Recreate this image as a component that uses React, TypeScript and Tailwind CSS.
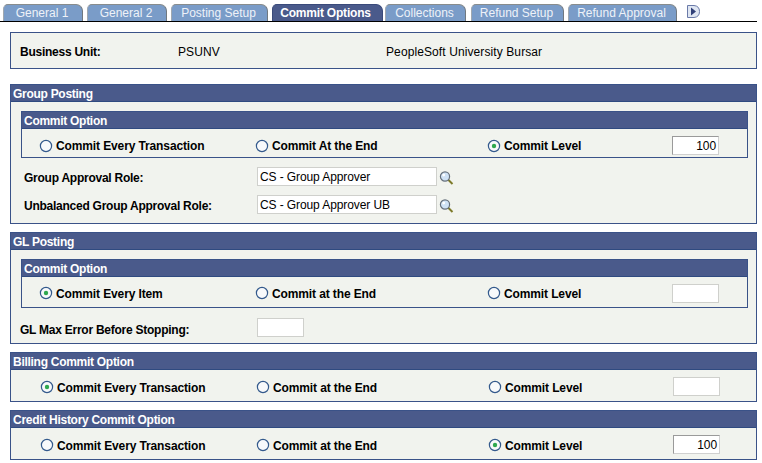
import React from "react";

const font = { fontFamily: '"Liberation Sans", Arial, sans-serif' };

function Radio({ on }: { on?: boolean }) {
  return (
    <svg width="14" height="14" viewBox="0 0 14 14" className="shrink-0">
      <circle cx="7" cy="7" r="5.6" fill="#f7f9fb" stroke="#33598c" strokeWidth="1.2" />
      {on && <circle cx="7" cy="7" r="2.2" fill="#2fa84f" />}
    </svg>
  );
}

function Lookup() {
  return (
    <svg width="15" height="14" viewBox="0 0 15 14" className="shrink-0">
      <line x1="9" y1="8.5" x2="13.5" y2="13" stroke="#7d7a2a" strokeWidth="2" />
      <circle cx="6" cy="5.5" r="4.6" fill="#cfe2f5" stroke="#66707c" strokeWidth="1.2" />
      <circle cx="4.7" cy="4.1" r="1.4" fill="#ffffff" />
    </svg>
  );
}

function Header({ children }: { children: React.ReactNode }) {
  return (
    <div className="h-[17px] bg-[#4a5a8b] border-b border-[#2f4a80] pl-[2px] text-[12px] leading-[18px] font-bold text-white tracking-[-0.28px]">
      {children}
    </div>
  );
}

function TextBox({ className, value, strong }: { className: string; value?: string; strong?: boolean }) {
  return (
    <div
      className={`h-[19px] bg-white border font-normal ${strong ? "border-t-[#9a9a9a] border-l-[#9a9a9a] border-r-[#d0d0d0] border-b-[#d0d0d0]" : "border-[#cfd0cc]"} text-[12px] leading-[18px] text-black tracking-[-0.1px] ${className}`}
    >
      {value}
    </div>
  );
}

function Option({ on, label, width, low }: { on: boolean; label: string; width: string; low?: boolean }) {
  return (
    <div className={`${width} flex items-center gap-[3px] h-[16px]`}>
      <Radio on={on} />
      <span className={`tracking-[-0.12px] ${low ? "pt-[3px]" : "pt-[1px]"}`}>{label}</span>
    </div>
  );
}

function RadioRow({
  labels,
  selected,
  value,
  strong,
  low,
  className,
}: {
  labels: string[];
  selected: number;
  value?: string;
  strong?: boolean;
  low?: boolean;
  className: string;
}) {
  return (
    <div className={`flex items-center text-[12px] font-bold text-black ${className}`}>
      <Option on={selected === 0} label={labels[0]} width="w-[216px]" low={low} />
      <Option on={selected === 1} label={labels[1]} width="w-[232px]" low={low} />
      <Option on={selected === 2} label={labels[2]} width="w-[185px]" low={low} />
      <TextBox className="w-[47px] text-right pr-[2px]" value={value} strong={strong} />
    </div>
  );
}

const tabs = [
  { t: "General 1", c: "w-[80px]" },
  { t: "General 2", c: "w-[80px] ml-[4px]" },
  { t: "Posting Setup", c: "w-[97px] ml-[4px]" },
  { t: "Commit Options", c: "w-[111px] ml-[4px]", on: true },
  { t: "Collections", c: "w-[81px] ml-[2px]" },
  { t: "Refund Setup", c: "w-[93px] ml-[5px]" },
  { t: "Refund Approval", c: "w-[109px] ml-[4px]" },
];

export default function App() {
  return (
    <div className="w-[762px] h-[463px] bg-white overflow-hidden" style={font}>
      <div className="h-[22px] pt-[4px] pr-[5px]">
        <div className="flex items-end pl-[3px] h-[18px] border-b border-black">
          {tabs.map((x) => (
            <div
              key={x.t}
              className={`${x.c} h-[17px] rounded-tl-[5px] rounded-tr-[7px] border-t border-l border-r text-center text-[12px] leading-[17px] ${
                x.on
                  ? "bg-[#4a5a8b] border-[#3a4a7a] text-white font-bold tracking-[-0.2px] pr-[4px]"
                  : "bg-[#7a9cc8] border-t-[#888c8c] border-l-[#a0a8b0] border-r-[#70787f] text-[#eef2f8] pr-[2px]"
              }`}
            >
              {x.t}
            </div>
          ))}
          <svg width="13" height="15" viewBox="0 0 13 15" className="ml-[10px] mb-[2px] shrink-0">
            <path d="M0.5 1.5 H7 Q12.5 2 12.5 7.5 Q12.5 13 7 13.5 H0.5 Z" fill="#dfe6f2" stroke="#6a7aa8" />
            <path d="M4 3.5 L9 7.5 L4 11.5 Z" fill="#2f3f78" />
          </svg>
        </div>
      </div>

      <div className="ml-[10px] mt-[10px] h-[37px] w-[747px] bg-[#f1f3ee] border border-[#3a5288] flex items-center pt-[2px] text-[12px] text-black">
        <div className="w-[167px] pl-[9px] font-bold tracking-[-0.25px]">Business Unit:</div>
        <div className="w-[208px] tracking-[0.1px]">PSUNV</div>
        <div className="tracking-[0.1px]">PeopleSoft University Bursar</div>
      </div>

      <div className="ml-[10px] mt-[15px] w-[747px] h-[140px] bg-[#f1f3ee] border border-[#3a5288]">
        <Header>Group Posting</Header>
        <div className="ml-[10px] mt-[9px] w-[727px] h-[47px] border border-[#3a5288]">
          <Header>Commit Option</Header>
          <RadioRow
            className="pl-[17px] h-[27px] pt-[6px]"
            labels={["Commit Every Transaction", "Commit At the End", "Commit Level"]}
            selected={2}
            value="100"
            strong
          />
        </div>
        <div className="flex items-center h-[19px] mt-[9px] pt-[2px] text-[12px] font-bold text-black tracking-[-0.25px]">
          <div className="w-[246px] pl-[13px]">Group Approval Role:</div>
          <TextBox className="w-[180px] pl-[2px] -mt-[2px]" value="CS - Group Approver" />
          <div className="ml-[2px]"><Lookup /></div>
        </div>
        <div className="flex items-center h-[19px] mt-[9px] pt-[2px] text-[12px] font-bold text-black tracking-[-0.25px]">
          <div className="w-[246px] pl-[13px]">Unbalanced Group Approval Role:</div>
          <TextBox className="w-[180px] pl-[2px] -mt-[2px]" value="CS - Group Approver UB" />
          <div className="ml-[2px]"><Lookup /></div>
        </div>
      </div>

      <div className="ml-[10px] mt-[8px] w-[747px] h-[112px] bg-[#f1f3ee] border border-[#3a5288]">
        <Header>GL Posting</Header>
        <div className="ml-[10px] mt-[9px] w-[727px] h-[49px] border border-[#3a5288]">
          <Header>Commit Option</Header>
          <RadioRow
            className="pl-[17px] h-[29px] pt-[3px]"
            labels={["Commit Every Item", "Commit at the End", "Commit Level"]}
            selected={0}
          />
        </div>
        <div className="flex items-center h-[19px] mt-[10px] text-[12px] font-bold text-black tracking-[-0.25px]">
          <div className="w-[246px] pl-[9px] pt-[4px]">GL Max Error Before Stopping:</div>
          <TextBox className="w-[47px]" />
        </div>
      </div>

      <div className="ml-[10px] mt-[8px] w-[747px] h-[50px] bg-[#f1f3ee] border border-[#3a5288]">
        <Header>Billing Commit Option</Header>
        <RadioRow
          className="pl-[29px] h-[31px] pt-[2px]"
          labels={["Commit Every Transaction", "Commit at the End", "Commit Level"]}
          selected={0}
          low
        />
      </div>

      <div className="ml-[10px] mt-[8px] w-[747px] h-[50px] bg-[#f1f3ee] border border-[#3a5288]">
        <Header>Credit History Commit Option</Header>
        <RadioRow
          className="pl-[29px] h-[31px] pt-[2px]"
          labels={["Commit Every Transaction", "Commit at the End", "Commit Level"]}
          selected={2}
          value="100"
          strong
          low
        />
      </div>
    </div>
  );
}
